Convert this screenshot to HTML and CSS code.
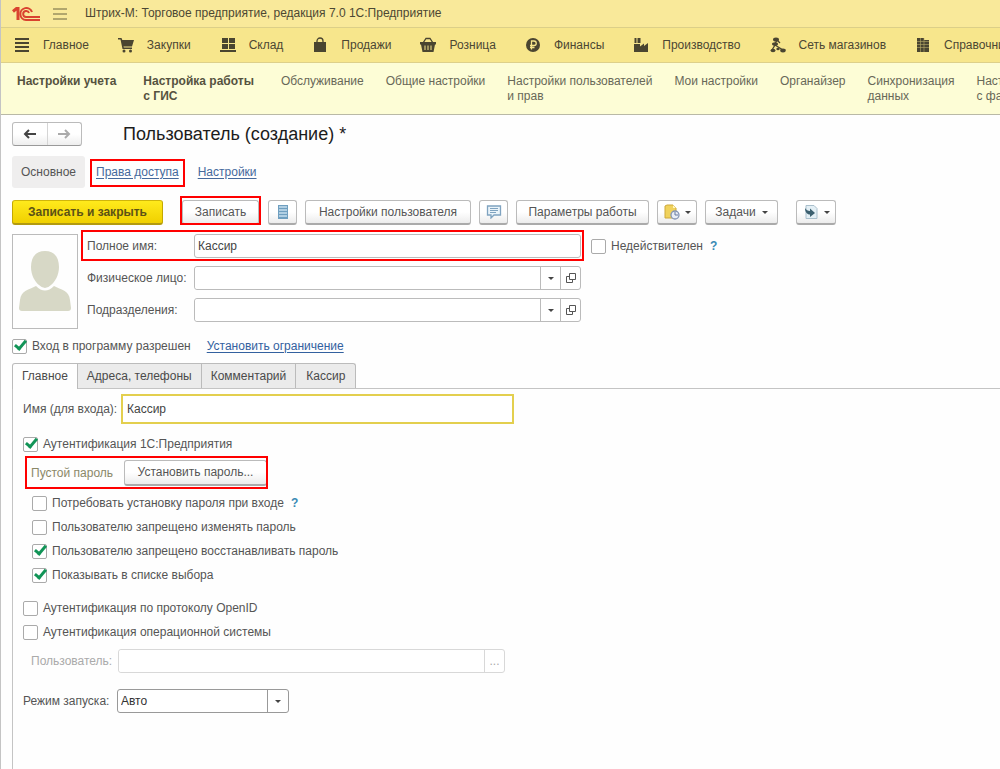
FILE: index.html
```html
<!doctype html>
<html lang="ru">

<head>
	<meta charset="UTF-8">
	<title>Пользователь (создание)</title>
	<meta name="viewport" content="width=device-width, initial-scale=1">
	<link rel="stylesheet" href="styles.css">
</head>

<body>
	<header class="titlebar">
		<svg class="logo" width="28" height="16" viewBox="0 0 28 16" fill="none" stroke="#d9432f">
			<path d="M1 5.500L4.500 2.500H6V14" stroke-width="3" />
			<path d="M20 6A6 6 0 1 0 14 14H28" stroke-width="2" />
			<path d="M17 7A3 3 0 1 0 14 11H28" stroke-width="2" />
		</svg>
		<button type="button" class="burger" aria-label="Меню">
			<svg width="14" height="12" viewBox="0 0 14 12" stroke="#6b6440"><path d="M0 1h14M0 6h14M0 11h14" /></svg>
		</button>
		<span>Штрих-М: Торговое предприятие, редакция 7.0 1С:Предприятие</span>
	</header>

	<nav class="sections">
		<a href="#"><svg viewBox="0 0 16 16"><path d="M1 1h14v2H1zM1 5h14v2H1zM1 9h14v2H1zM1 13h14v2H1z" /></svg>Главное</a>
		<a href="#"><svg viewBox="0 0 16 16"><path d="M0 1h3.500l.8 2H16l-2 6.500H5.500l.3 1H14v1.500H4.500L2.500 2.500H0z" /><circle cx="6" cy="14" r="1.500" /><circle cx="12.500" cy="14" r="1.500" /></svg>Закупки</a>
		<a href="#"><svg viewBox="0 0 16 16"><path d="M2 1h6v5H2zM9 1h6v5H9zM2 7h6v5H2zM9 7h6v5H9zM0 13h16v2H0z" /></svg>Склад</a>
		<a href="#"><svg viewBox="0 0 16 16"><path d="M2 5h12v10H2z" /><path d="M5 8V4a3 3 0 0 1 6 0v4" fill="none" stroke="#4a4530" stroke-width="1.300" /></svg>Продажи</a>
		<a href="#"><svg viewBox="0 0 16 16"><path d="M0 5h16v2.500h-1L13.500 15h-11L1 7.500H0z" /><path d="M3 6l3-4.500h4L13 6" fill="none" stroke="#4a4530" stroke-width="1.300" /><path d="M5 8.500V13M8 8.500V13M11 8.500V13" stroke="#f7e68c" /></svg>Розница</a>
		<a href="#"><svg viewBox="0 0 16 16"><circle cx="8" cy="8" r="7" /><path d="M6.500 12.500V4H9a2.200 2.200 0 0 1 0 4.500H5M5 10.500h4.500" fill="none" stroke="#f7e68c" stroke-width="1.300" /></svg>Финансы</a>
		<a href="#"><svg viewBox="0 0 16 16"><path d="M1 15V7h6v2.500l4-3V9l4-3v9zM1.500 6V1h2v5zM4.500 6V1h3v5z" /></svg>Производство</a>
		<a href="#"><svg viewBox="0 0 16 16"><path d="M7 3l-2.500 5M5 8l-3 5M5 8l8 5M7 3l3 3" stroke="#4a4530" stroke-width="1.300" /><ellipse cx="6" cy="2.500" rx="3" ry="2" /><ellipse cx="5" cy="7" rx="3" ry="1.800" /><ellipse cx="3" cy="13.500" rx="2.500" ry="1.800" /><ellipse cx="8" cy="12" rx="1.700" ry="1.300" /><ellipse cx="13" cy="13.500" rx="2.800" ry="1.900" /></svg>Сеть магазинов</a>
		<a href="#"><svg viewBox="0 0 16 16"><path d="M2 1h7v14H2zM9 3h5v12H9z" /><path d="M2 4.500h12M2 7.500h12M2 10.500h12M5.500 1v14M9 1v14" stroke="#b5a968" stroke-width=".6" /></svg>Справочники</a>
	</nav>

	<nav class="functions">
		<a href="#" class="strong">Настройки учета</a>
		<a href="#" class="strong">Настройка работы<br>с ГИС</a>
		<a href="#">Обслуживание</a>
		<a href="#">Общие настройки</a>
		<a href="#">Настройки пользователей<br>и прав</a>
		<a href="#">Мои настройки</a>
		<a href="#">Органайзер</a>
		<a href="#">Синхронизация<br>данных</a>
		<a href="#">Настройки обмена<br>с файлами</a>
	</nav>

	<main>
		<div class="heading">
			<div class="history">
				<button type="button" aria-label="Назад"><svg width="14" height="10" viewBox="0 0 14 10" fill="none" stroke="#444" stroke-width="2"><path d="M13 5H2M6 1L2 5l4 4" /></svg></button>
				<button type="button" aria-label="Вперед"><svg width="14" height="10" viewBox="0 0 14 10" fill="none" stroke="#aaa" stroke-width="2"><path d="M1 5h11M8 1l4 4-4 4" /></svg></button>
			</div>
			<h1>Пользователь (создание) *</h1>
		</div>

		<nav class="pages">
			<span class="current">Основное</span>
			<a href="#" class="marked">Права доступа</a>
			<a href="#">Настройки</a>
		</nav>

		<div class="toolbar">
			<button type="button" class="btn primary">Записать и закрыть</button>
			<span class="marked"><button type="button" class="btn save">Записать</button></span>
			<button type="button" class="btn icon" aria-label="Список">
				<svg width="10" height="14" viewBox="0 0 10 14"><path d="M0 0h10v14H0z" fill="#6f9fc0" /><path d="M1 2h8M1 5h8M1 8h8M1 11h8" stroke="#c7e0ee" stroke-width="1.500" /></svg>
			</button>
			<button type="button" class="btn settings">Настройки пользователя</button>
			<button type="button" class="btn icon" aria-label="Обсуждение">
				<svg width="16" height="14" viewBox="0 0 16 14" fill="none" stroke="#7fa3c0"><path d="M1.500 1h13v9H8l-3 3v-3H1.500z" fill="#eaf4fa" stroke-width="1.300" /><path d="M4 3.500h8M4 5.500h8M4 7.500h6" /></svg>
			</button>
			<button type="button" class="btn params">Параметры работы</button>
			<button type="button" class="btn drop" aria-label="Напоминание">
				<svg width="16" height="16" viewBox="0 0 16 16"><path d="M1 2l2-1h6l3 3v10H1z" fill="#f0d25c" stroke="#cda93a" /><path d="M9 1v3h3" fill="#fff5c0" /><circle cx="11" cy="11" r="4" fill="#e8edf5" stroke="#8494b5" stroke-width="1.300" /><path d="M11 8v3h3" fill="none" stroke="#6678a0" /></svg>
				<i class="caret"></i>
			</button>
			<button type="button" class="btn tasks">Задачи<i class="caret"></i></button>
			<button type="button" class="btn drop print" aria-label="Отправить">
				<svg width="16" height="16" viewBox="0 0 16 16"><path d="M3 1.500h8l3 3v10H3z" fill="#e3eff5" stroke="#a9bfcc" /><path d="M2 4c1 2 3 3 5 3V4.500l5 4.500-5 4v-2.500C4 10.500 2 8 2 4z" fill="#3c6070" /></svg>
				<i class="caret"></i>
			</button>
		</div>

		<div class="person">
			<div class="photo">
				<svg width="54" height="64" viewBox="0 0 54 64" fill="#d7d8c6"><path d="M27 1C18 1 13 7 13 17c0 8 4 15 8 18q6 6 12 0c4-3 8-10 8-18C41 7 36 1 27 1z" /><path d="M18 36q9 9 18 0c7 4 15 4 16 14l1 8q0 3-3 3H4q-3 0-3-3l1-8C3 40 11 40 18 36z" /></svg>
			</div>
			<div class="fields">
				<div class="field marked">
					<label for="fullname">Полное имя:</label>
					<input type="text" id="fullname" value="Кассир">
				</div>
				<div class="field">
					<label for="individual">Физическое лицо:</label>
					<div class="combo">
						<input type="text" id="individual">
						<button type="button" aria-label="Выбрать"><i class="caret"></i></button>
						<button type="button" aria-label="Открыть"><svg width="10" height="10" viewBox="0 0 10 10" fill="none" stroke="#555"><path d="M3.500 .5h6v6h-6zM3.500 3.500h-3v6h6v-3" /></svg></button>
					</div>
				</div>
				<div class="field">
					<label for="department">Подразделения:</label>
					<div class="combo">
						<input type="text" id="department">
						<button type="button" aria-label="Выбрать"><i class="caret"></i></button>
						<button type="button" aria-label="Открыть"><svg width="10" height="10" viewBox="0 0 10 10" fill="none" stroke="#555"><path d="M3.500 .5h6v6h-6zM3.500 3.500h-3v6h6v-3" /></svg></button>
					</div>
				</div>
			</div>
			<div class="check invalid">
				<input type="checkbox" id="invalid"><label for="invalid">Недействителен</label><a href="#" class="help">?</a>
			</div>
		</div>

		<div class="check access">
			<input type="checkbox" id="access" checked><label for="access">Вход в программу разрешен</label>
			<a href="#" class="limit">Установить ограничение</a>
		</div>

		<div class="tabs" role="tablist">
			<button type="button" role="tab" aria-selected="true" class="active">Главное</button>
			<button type="button" role="tab">Адреса, телефоны</button>
			<button type="button" role="tab">Комментарий</button>
			<button type="button" role="tab">Кассир</button>
		</div>

		<section class="panel">
			<div class="row login">
				<label for="login">Имя (для входа):</label>
				<input type="text" id="login" value="Кассир">
			</div>
			<div class="check">
				<input type="checkbox" id="auth1c" checked><label for="auth1c">Аутентификация 1С:Предприятия</label>
			</div>
			<div class="password marked">
				<span>Пустой пароль</span>
				<button type="button" class="btn">Установить пароль...</button>
			</div>
			<div class="nested">
				<div class="check">
					<input type="checkbox" id="require"><label for="require">Потребовать установку пароля при входе</label><a href="#" class="help">?</a>
				</div>
				<div class="check">
					<input type="checkbox" id="nochange"><label for="nochange">Пользователю запрещено изменять пароль</label>
				</div>
				<div class="check">
					<input type="checkbox" id="norestore" checked><label for="norestore">Пользователю запрещено восстанавливать пароль</label>
				</div>
				<div class="check">
					<input type="checkbox" id="show" checked><label for="show">Показывать в списке выбора</label>
				</div>
			</div>
			<div class="check">
				<input type="checkbox" id="openid"><label for="openid">Аутентификация по протоколу OpenID</label>
			</div>
			<div class="check">
				<input type="checkbox" id="os"><label for="os">Аутентификация операционной системы</label>
			</div>
			<div class="row osuser">
				<label for="osuser">Пользователь:</label>
				<div class="combo">
					<input type="text" id="osuser" disabled>
					<button type="button" disabled>...</button>
				</div>
			</div>
			<div class="row mode">
				<label for="mode">Режим запуска:</label>
				<div class="choice">
					<select id="mode">
						<option>Авто</option>
					</select>
					<i class="caret"></i>
				</div>
			</div>
		</section>
	</main>
</body>

</html>
```
FILE: styles.css
```css
* {
	box-sizing: border-box;
}

body {
	margin: 0;
	min-height: 100vh;
	display: flex;
	flex-direction: column;
	background: #fefefe;
	border-left: 1px solid #c4c4c4;
	font: 12px/15px "Liberation Sans", Arial, sans-serif;
	color: #555;
}

button,
input,
select {
	font: inherit;
	color: inherit;
	margin: 0;
}

button {
	cursor: pointer;
	white-space: nowrap;
}

svg {
	flex: none;
}

/* Top of the window */
.titlebar {
	display: flex;
	align-items: center;
	height: 28px;
	padding-left: 11px;
	background: #f9e99a;
	border-bottom: 1px solid #dccf88;
	color: #4c4733;
}

.burger {
	display: flex;
	margin: 0 18px 0 13px;
	padding: 0;
	border: 0;
	background: none;
}

.sections {
	display: flex;
	align-items: center;
	gap: 29px;
	height: 35px;
	padding-left: 13px;
	overflow: hidden;
	background: #f7e68c;
	border-bottom: 1px solid #ddd08a;
}

.sections a {
	display: flex;
	align-items: center;
	gap: 13px;
	color: #4c4733;
	text-decoration: none;
	white-space: nowrap;
}

.sections svg {
	width: 16px;
	height: 16px;
	fill: #4a4530;
}

.functions {
	display: flex;
	gap: 22px;
	height: 52px;
	padding: 11px 0 0 16px;
	overflow: hidden;
	background: #fdfdd6;
	border-bottom: 1px solid #b9b9a6;
}

.functions a {
	color: #686858;
	text-decoration: none;
	white-space: nowrap;
}

.functions .strong {
	margin-right: 5px;
	font-weight: bold;
	color: #55523f;
}

main {
	flex: 1;
	display: flex;
	flex-direction: column;
	padding: 7px 0 0 11px;
}

/* Red frame around the things to fill in */
.marked {
	position: relative;
}

.marked::after {
	content: "";
	position: absolute;
	inset: -4px -2px;
	border: 2px solid #f00;
	pointer-events: none;
}

.heading {
	display: flex;
	align-items: center;
	gap: 41px;
	height: 24px;
}

.heading h1 {
	margin: 0;
	font-size: 18px;
	line-height: 24px;
	font-weight: normal;
	color: #1c1c1c;
}

.history {
	display: flex;
	width: 70px;
	height: 24px;
	border: 1px solid #bbb;
	border-bottom-color: #999;
	border-radius: 3px;
	background: linear-gradient(#fff 50%, #eee);
}

.history button {
	flex: 1;
	display: flex;
	align-items: center;
	justify-content: center;
	padding: 0;
	border: 0;
	background: none;
}

.history button + button {
	border-left: 1px solid #d5d5d5;
}

.pages {
	display: flex;
	align-items: center;
	height: 32px;
	margin-top: 10px;
}

.pages .current {
	width: 73px;
	padding: 9px 0 8px;
	text-align: center;
	background: #efeeee;
	border-radius: 3px;
}

.pages a {
	margin-left: 11px;
	color: #45699c;
	text-underline-offset: 2px;
}

.pages .marked + a {
	margin-left: 19px;
}

.pages .marked::after {
	inset: -6px -6px -7px;
}

/* Command bar */
.toolbar {
	display: flex;
	gap: 8px;
	margin-top: 12px;
}

.btn {
	display: flex;
	align-items: center;
	justify-content: center;
	height: 25px;
	padding: 0;
	border: 1px solid #bbb;
	border-bottom: 2px solid #aaa;
	border-radius: 3px;
	background: linear-gradient(#fff 50%, #ececec);
	color: #555;
}

.primary {
	width: 151px;
	margin-right: 11px;
	border-color: #d0b60a #c4a800 #b29a10;
	background: linear-gradient(#ffea1c, #f0d000);
	font-weight: bold;
	color: #5c5216;
}

.save {
	width: 77px;
}

.toolbar .marked {
	margin-right: 1px;
}

.toolbar .marked::after {
	inset: -4px -2px 0;
}

.icon {
	width: 29px;
}

.settings {
	width: 166px;
}

.params {
	width: 133px;
}

.drop {
	width: 40px;
	gap: 5px;
}

.tasks {
	width: 73px;
	gap: 6px;
}

.print {
	margin-left: 10px;
}

.caret {
	border: 3px solid transparent;
	border-top-color: #444;
	border-bottom: 0;
}

/* User card */
.person {
	display: flex;
	margin-top: 9px;
}

.photo {
	display: flex;
	align-items: center;
	justify-content: center;
	width: 66px;
	height: 95px;
	border: 1px solid #bbb;
}

.fields {
	display: flex;
	flex-direction: column;
	gap: 8px;
	margin-left: 9px;
}

.field {
	display: flex;
	align-items: center;
}

.field label {
	width: 107px;
}

.field.marked::after {
	inset: -4px -3px -3px -6px;
}

input[type="text"] {
	width: 387px;
	height: 24px;
	padding: 0 3px;
	border: 1px solid #bbb;
	border-radius: 3px;
	background: #fff;
	color: #444;
	outline: 0;
}

.combo {
	display: flex;
	width: 387px;
	height: 24px;
	border: 1px solid #bbb;
	border-radius: 3px;
	background: #fff;
}

.combo input[type="text"] {
	flex: 1;
	width: 0;
	height: 22px;
	border: 0;
}

.combo button {
	display: flex;
	align-items: center;
	justify-content: center;
	width: 20px;
	padding: 0;
	border: 0;
	border-left: 1px solid #bbb;
	background: none;
}

.check {
	display: flex;
	align-items: center;
	height: 24px;
}

.check input {
	appearance: none;
	width: 15px;
	height: 15px;
	margin-right: 5px;
	border: 1px solid #aaa;
	border-radius: 2px;
	background: #fff;
}

.check input:checked {
	position: relative;
}

/* Tick sticks out of the box a little */
.check input:checked::before {
	content: "";
	position: absolute;
	left: 4px;
	top: -2px;
	width: 4px;
	height: 9px;
	border: solid #119457;
	border-width: 0 3px 3px 0;
	transform: rotate(40deg);
}

.help {
	margin-left: 7px;
	font-weight: bold;
	color: #3a8ab5;
	text-decoration: none;
}

.invalid {
	margin-left: 10px;
}

.access {
	margin-top: 5px;
}

.limit {
	margin-left: 16px;
	color: #33619f;
	text-underline-offset: 2px;
}

/* Tabs */
.tabs {
	display: flex;
	margin-top: 5px;
}

.tabs button {
	height: 25px;
	padding: 0 9px;
	border: 1px solid #bbb;
	border-left-width: 0;
	border-bottom: 0;
	background: #ebebeb;
	color: #4a4a4a;
}

.tabs button:last-child {
	padding: 0 10px;
	border-radius: 0 3px 0 0;
}

.tabs .active {
	height: 26px;
	margin-bottom: -1px;
	border-left-width: 1px;
	border-radius: 3px 0 0 0;
	background: #fefefe;
	z-index: 1;
}

.panel {
	flex: 1;
	padding: 5px 0 16px 10px;
	border: solid #c4c4c4;
	border-width: 1px 0 0 1px;
}

.row {
	display: flex;
	align-items: center;
}

.login {
	margin-bottom: 8px;
}

.login label {
	width: 98px;
}

.login input[type="text"] {
	width: 393px;
	height: 30px;
	border: 2px solid #e3cf4e;
	border-radius: 0;
	padding: 0 4px;
}

.password {
	display: flex;
	align-items: center;
	width: 236px;
	margin: 4px 0 5px 8px;
	color: #8a8868;
}

.password span {
	width: 93px;
}

.password .btn {
	width: 143px;
	height: 26px;
}

.password.marked::after {
	inset: -4px -1px -3px -6px;
}

.nested {
	margin: 0 0 9px 9px;
}

.osuser {
	margin: 5px 0 16px 8px;
	color: #aaa;
}

.osuser label {
	width: 87px;
}

.osuser .combo,
.osuser .combo button {
	border-color: #d8d8d8;
}

.mode label {
	width: 94px;
}

.choice {
	display: flex;
	align-items: center;
	width: 172px;
	height: 24px;
	border: 1px solid #999;
	border-radius: 3px;
	padding-right: 7px;
	background: #fff;
}

.choice select {
	appearance: none;
	flex: 1;
	align-self: stretch;
	margin-right: 7px;
	padding: 0 3px;
	border: 0;
	border-right: 1px solid #999;
	background: none;
	color: #333;
}
```
